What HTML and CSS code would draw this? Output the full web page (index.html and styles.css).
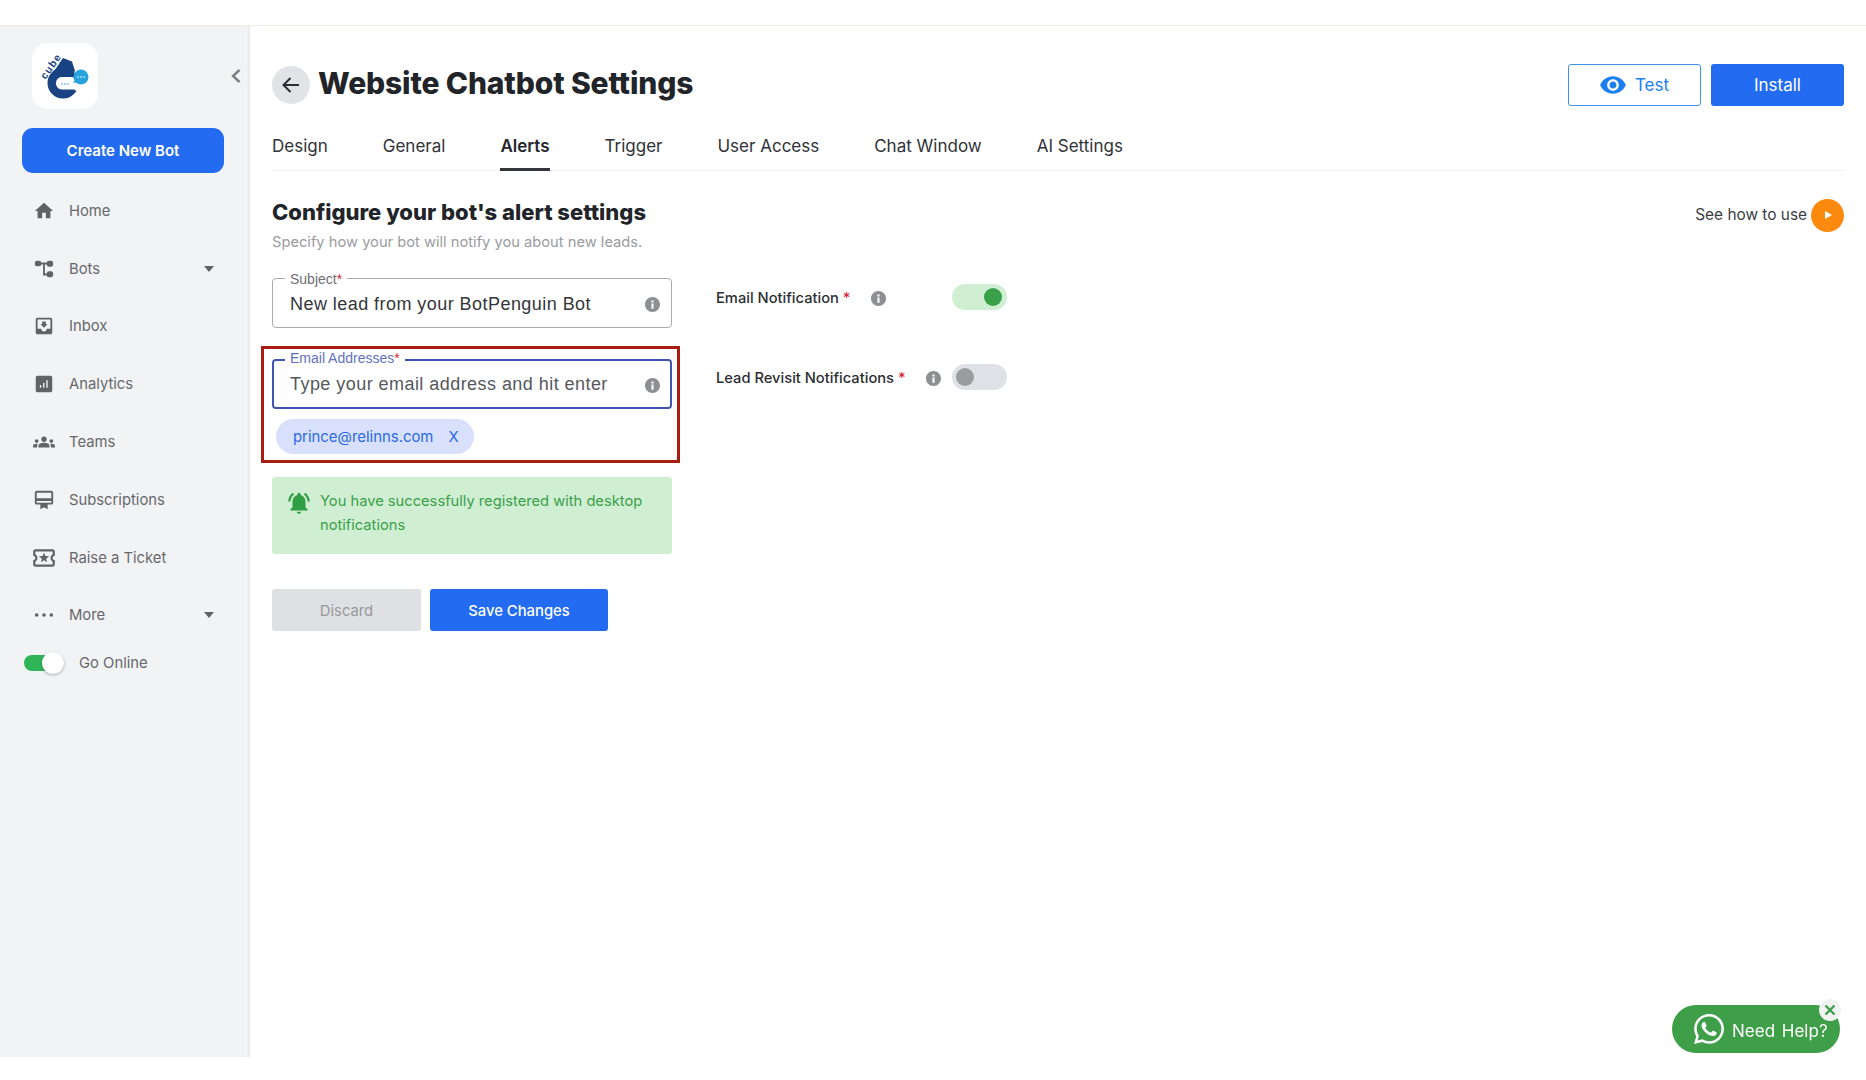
FILE: index.html
```html
<!DOCTYPE html>
<html lang="en">
<head>
<meta charset="utf-8">
<title>Website Chatbot Settings</title>
<link rel="stylesheet" href="styles.css">
</head>
<body>
<svg class="defs" width="0" height="0" aria-hidden="true">
  <symbol id="info" viewBox="2 2 20 20"><path d="M12 2C6.48 2 2 6.48 2 12s4.48 10 10 10 10-4.48 10-10S17.52 2 12 2zm1.4 15.5h-2.8v-6.7h2.8v6.7zm0-8.3h-2.8V6.6h2.8v2.6z"/></symbol>
  <symbol id="caret" viewBox="0 0 10 6"><path d="M0 0h10L5 6z"/></symbol>
</svg>
<header class="topbar"></header>
<div class="shell">
  <aside class="sidebar">
    <div class="brand">
      <div class="logo">
        <svg viewBox="0 0 66 66" width="66" height="66">
          <circle cx="31" cy="40" r="15.500" fill="#1a4384"/>
          <path fill="#1a4384" d="M31 15l9 3.500 3 9.500-10 12-17-3z"/>
          <text class="logo-word" transform="translate(13.500 37) rotate(-55)">cube</text>
          <path fill="#fff" d="M30 34h9c6 0 9 4 8 8l1 8-6-3.500H30c-8 0-8-12.500 0-12.500z"/>
          <circle cx="49" cy="34" r="7.500" fill="#27a4dd"/>
          <path fill="#27a4dd" d="M43 37l-2 3 6-1z"/>
          <g fill="#fff"><circle cx="46" cy="34" r=".8"/><circle cx="49" cy="34" r=".8"/><circle cx="52" cy="34" r=".8"/></g>
          <g fill="#27a4dd"><circle cx="30" cy="41" r=".8"/><circle cx="33" cy="41" r=".8"/><circle cx="36" cy="41" r=".8"/></g>
        </svg>
      </div>
      <svg class="collapse" viewBox="0 0 10 16" width="10" height="16"><path d="M8.500 2L2 8l6.500 6" fill="none" stroke="#7a7d82" stroke-width="2.400"/></svg>
    </div>
    <button class="create">Create New Bot</button>
    <nav class="nav">
      <a class="nav-item"><svg class="nav-icon" viewBox="0 0 24 24"><path d="M10 20v-6h4v6h5v-8h3L12 3 2 12h3v8z"/></svg><span>Home</span></a>
      <a class="nav-item"><svg class="nav-icon" viewBox="0 0 24 24"><rect x="2" y="3" width="7" height="6" rx="2.500"/><rect x="15" y="3" width="7" height="6.500" rx="2.500"/><rect x="15" y="14.500" width="7" height="6.500" rx="2.500"/><path d="M8 5h8v2h-3v10h3v2h-5V7H8z"/></svg><span>Bots</span><svg class="caret"><use href="#caret"/></svg></a>
      <a class="nav-item"><svg class="nav-icon" viewBox="0 0 24 24"><path d="M19 3H4.990c-1.110 0-1.980.9-1.980 2L3 19c0 1.100.88 2 1.990 2H19c1.100 0 2-.9 2-2V5c0-1.100-.9-2-2-2zm0 12h-4c0 1.660-1.350 3-3 3s-3-1.340-3-3H4.990V5H19v10zm-3-5h-2V7h-4v3H8l4 4 4-4z"/></svg><span>Inbox</span></a>
      <a class="nav-item"><svg class="nav-icon" viewBox="0 0 24 24"><path d="M19 3H5c-1.100 0-2 .9-2 2v14c0 1.100.9 2 2 2h14c1.100 0 2-.9 2-2V5c0-1.100-.9-2-2-2zM9 16H7.500v-3H9v3zm3.500 0H11v-5h1.500v5zm3.500 0h-1.500V8H16v8z"/></svg><span>Analytics</span></a>
      <a class="nav-item"><svg class="nav-icon" viewBox="0 0 24 24"><path d="M4 13c1.100 0 2-.9 2-2s-.9-2-2-2-2 .9-2 2 .9 2 2 2zm1.130 1.100c-.37-.06-.74-.1-1.130-.1-.99 0-1.930.21-2.780.58C.48 14.900 0 15.620 0 16.430V18h4.500v-1.610c0-.83.23-1.610.63-2.290zM20 13c1.100 0 2-.9 2-2s-.9-2-2-2-2 .9-2 2 .9 2 2 2zm4 3.430c0-.81-.48-1.530-1.220-1.850-.85-.37-1.790-.58-2.780-.58-.39 0-.76.04-1.130.1.400.68.63 1.460.63 2.290V18H24v-1.570zm-7.760-2.780c-1.170-.52-2.610-.9-4.240-.9-1.630 0-3.070.39-4.240.9C6.680 14.130 6 15.210 6 16.390V18h12v-1.610c0-1.180-.68-2.260-1.760-2.740zM12 12c1.660 0 3-1.340 3-3s-1.340-3-3-3-3 1.340-3 3 1.340 3 3 3z"/></svg><span>Teams</span></a>
      <a class="nav-item"><svg class="nav-icon" viewBox="0 0 24 24"><path d="M20 2H4c-1.110 0-2 .89-2 2v11c0 1.110.89 2 2 2h4v5l4-2 4 2v-5h4c1.110 0 2-.89 2-2V4c0-1.110-.89-2-2-2zm0 13H4v-2h16v2zm0-5H4V4h16v6z"/></svg><span>Subscriptions</span></a>
      <a class="nav-item"><svg class="nav-icon nav-icon-wide" viewBox="0 0 24 24"><path d="M22 10V6c0-1.110-.9-2-2-2H4c-1.100 0-1.990.89-1.990 2v4c1.100 0 1.990.9 1.990 2s-.89 2-2 2v4c0 1.100.9 2 2 2h16c1.100 0 2-.9 2-2v-4c-1.100 0-2-.9-2-2s.9-2 2-2zm-2-1.460c-1.190.69-2 1.990-2 3.460s.81 2.770 2 3.460V18H4v-2.540c1.190-.69 2-1.990 2-3.460 0-1.480-.8-2.770-1.990-3.460L4 6h16v2.540zM9.070 16L12 14.120 14.930 16l-.89-3.360 2.690-2.200-3.470-.21L12 7l-1.270 3.220-3.470.21 2.690 2.200z"/></svg><span>Raise a Ticket</span></a>
      <a class="nav-item"><svg class="nav-icon" viewBox="0 0 24 24"><path d="M4 10a2 2 0 1 0 0 4 2 2 0 0 0 0-4zm8 0a2 2 0 1 0 0 4 2 2 0 0 0 0-4zm8 0a2 2 0 1 0 0 4 2 2 0 0 0 0-4z"/></svg><span>More</span><svg class="caret"><use href="#caret"/></svg></a>
    </nav>
    <div class="online">
      <span class="online-switch"><span class="online-knob"></span></span>
      <span>Go Online</span>
    </div>
  </aside>
  <main class="main">
    <div class="page-head">
      <button class="back" aria-label="Back">
        <svg viewBox="0 0 24 24" width="24" height="24"><path d="M20 12H5M11.500 5L4.500 12l7 7" fill="none" stroke="#2a2d32" stroke-width="2"/></svg>
      </button>
      <h1 class="title">Website Chatbot Settings</h1>
      <div class="head-actions">
        <button class="btn-test">
          <svg viewBox="0 0 24 24" width="28" height="28"><path fill="#1b7ff0" d="M12 4.500C7 4.500 2.730 7.610 1 12c1.730 4.390 6 7.500 11 7.500s9.270-3.110 11-7.500c-1.730-4.390-6-7.500-11-7.500zM12 17c-2.760 0-5-2.240-5-5s2.240-5 5-5 5 2.240 5 5-2.240 5-5 5zm0-8c-1.660 0-3 1.340-3 3s1.340 3 3 3 3-1.340 3-3-1.340-3-3-3z"/></svg>
          Test
        </button>
        <button class="btn-install">Install</button>
      </div>
    </div>
    <div class="tabs">
      <a class="tab">Design</a>
      <a class="tab">General</a>
      <a class="tab tab-active">Alerts</a>
      <a class="tab">Trigger</a>
      <a class="tab">User Access</a>
      <a class="tab">Chat Window</a>
      <a class="tab">AI Settings</a>
    </div>
    <div class="section-head">
      <div>
        <h2 class="section-title">Configure your bot's alert settings</h2>
        <p class="section-sub">Specify how your bot will notify you about new leads.</p>
      </div>
      <div class="how-to">
        <span>See how to use</span>
        <span class="play"><svg viewBox="0 0 10 10" width="10" height="10"><path d="M2 1l7 4-7 4z" fill="#fff"/></svg></span>
      </div>
    </div>
    <div class="settings">
      <div class="form-col">
        <div class="field">
          <label class="field-label">Subject<b>*</b></label>
          <span class="field-text">New lead from your BotPenguin Bot</span>
          <svg class="info info-field"><use href="#info"/></svg>
        </div>
        <div class="highlight">
          <div class="field field-focus">
            <label class="field-label">Email Addresses<b>*</b></label>
            <span class="field-text field-ph">Type your email address and hit enter</span>
            <svg class="info info-field"><use href="#info"/></svg>
          </div>
          <div class="chip"><span>prince@relinns.com</span><span class="chip-x">X</span></div>
        </div>
        <div class="alert">
          <svg class="bell" viewBox="0 0 24 24"><path d="M7.580 4.080L6.150 2.650C3.750 4.480 2.170 7.300 2.030 10.500h2c.15-2.650 1.510-4.970 3.550-6.420zm12.390 6.420h2c-.15-3.200-1.730-6.020-4.120-7.850l-1.420 1.430c2.020 1.450 3.390 3.770 3.540 6.420zM18 11c0-3.070-1.640-5.640-4.500-6.320V4c0-.83-.67-1.500-1.500-1.500s-1.500.67-1.500 1.500v.68C7.630 5.360 6 7.920 6 11v5l-2 2v1h16v-1l-2-2v-5zm-6 11c.14 0 .27-.01.4-.04.65-.14 1.180-.58 1.440-1.180.1-.24.15-.5.15-.78h-4c.01 1.100.9 2 2.010 2z"/></svg>
          <p>You have successfully registered with desktop notifications</p>
        </div>
        <div class="form-actions">
          <button class="btn-discard">Discard</button>
          <button class="btn-save">Save Changes</button>
        </div>
      </div>
      <div class="toggles">
        <div class="toggle-row">
          <span class="toggle-label">Email Notification <i>*</i></span>
          <svg class="info info-side"><use href="#info"/></svg>
          <span class="switch switch-on"><span class="knob"></span></span>
        </div>
        <div class="toggle-row">
          <span class="toggle-label">Lead Revisit Notifications <i>*</i></span>
          <svg class="info info-side"><use href="#info"/></svg>
          <span class="switch"><span class="knob"></span></span>
        </div>
      </div>
    </div>
  </main>
</div>
<div class="help">
  <svg viewBox="0 0 24 24" width="30" height="30"><path fill="#fff" d="M17.472 14.382c-.297-.149-1.758-.867-2.030-.967-.273-.099-.471-.148-.670.150-.197.297-.767.966-.940 1.164-.173.199-.347.223-.644.075-.297-.150-1.255-.463-2.390-1.475-.883-.788-1.480-1.761-1.653-2.059-.173-.297-.018-.458.130-.606.134-.133.298-.347.446-.520.149-.174.198-.298.298-.497.099-.198.050-.371-.025-.520-.075-.149-.669-1.612-.916-2.207-.242-.579-.487-.500-.669-.510-.173-.008-.371-.010-.570-.010-.198 0-.520.074-.792.372-.272.297-1.040 1.016-1.040 2.479 0 1.462 1.065 2.875 1.213 3.074.149.198 2.096 3.200 5.077 4.487.709.306 1.262.489 1.694.625.712.227 1.360.195 1.871.118.571-.085 1.758-.719 2.006-1.413.248-.694.248-1.289.173-1.413-.074-.124-.272-.198-.570-.347m-5.421 7.403h-.004a9.870 9.870 0 0 1-5.031-1.378l-.361-.214-3.741.982.998-3.648-.235-.374a9.860 9.860 0 0 1-1.510-5.260c.001-5.450 4.436-9.884 9.888-9.884 2.640 0 5.122 1.030 6.988 2.898a9.825 9.825 0 0 1 2.893 6.994c-.003 5.450-4.437 9.884-9.885 9.884m8.413-18.297A11.815 11.815 0 0 0 12.050 0C5.495 0 .160 5.335.157 11.892c0 2.096.547 4.142 1.588 5.945L.057 24l6.305-1.654a11.882 11.882 0 0 0 5.683 1.448h.005c6.554 0 11.890-5.335 11.893-11.893a11.821 11.821 0 0 0-3.480-8.413z"/></svg>
  <span class="help-text">Need Help?</span>
  <span class="help-close"><svg viewBox="0 0 12 12" width="12" height="12"><path d="M1.500 1.500l9 9M10.500 1.500l-9 9" stroke="#3f9f49" stroke-width="2.400" fill="none"/></svg></span>
</div>
</body>
</html>
```

FILE: styles.css
```css
* { box-sizing: border-box; }
html, body { margin: 0; padding: 0; }
body {
  width: 1866px;
  height: 1080px;
  overflow: hidden;
  background: #fff;
  font-family: Inter, "Noto Sans", sans-serif;
  color: #24272c;
}
.defs { position: absolute; }
button { font-family: inherit; cursor: pointer; border: 0; }
h1, h2, p { margin: 0; }

.topbar { height: 26px; border-bottom: 1px solid #f3e9de; background: #fff; }
.shell { display: flex; height: 1031px; }

.sidebar {
  width: 250px;
  flex: none;
  background: #f2f3f5;
  box-shadow: inset -3px 0 2px -1px #e8e9eb;
  padding: 17px 26px 0 22px;
}
.brand { display: flex; align-items: center; justify-content: space-between; padding-left: 10px; }
.logo { width: 66px; height: 66px; background: #fff; border-radius: 15px; overflow: hidden; }
.logo-word { font: 700 10.500px "Liberation Sans", sans-serif; letter-spacing: 1px; fill: #1a4384; stroke: #fff; stroke-width: .8px; paint-order: stroke; }
.collapse { margin-right: -17px; margin-bottom: 1px; }
.create {
  display: block;
  width: 202px;
  height: 45px;
  margin-top: 19px;
  background: #236bf0;
  color: #fff;
  border-radius: 11px;
  font-size: 15px;
  font-weight: 600;
}
.nav { margin-top: 9px; }
.nav-item {
  display: flex;
  align-items: center;
  height: 57.8px;
  padding-left: 11px;
  color: #66686c;
  font-size: 14.800px;
}
.nav-icon { width: 22px; height: 22px; fill: #606266; flex: none; margin-right: 14px; }
.nav-icon-wide { width: 26px; height: 26px; margin: 0 12px 0 -2px; }
.caret { width: 10px; height: 6px; fill: #606266; margin-left: auto; margin-right: 10px; }
.online { display: flex; align-items: center; gap: 15px; margin-top: 10px; color: #66686c; font-size: 14.800px; padding-left: 2px; }
.online-switch { display: flex; justify-content: flex-end; width: 40px; height: 16px; background: #2fb457; border-radius: 8px; align-items: center; }
.online-knob { width: 22px; height: 22px; background: #fff; border-radius: 50%; box-shadow: 0 1px 3px rgba(0,0,0,.3); }

.main { flex: 1; padding: 38px 22px 0; min-width: 0; }
.page-head { display: flex; align-items: center; height: 42px; }
.back { width: 38px; height: 38px; border-radius: 50%; background: #e2e3e7; display: flex; align-items: center; justify-content: center; padding: 0; margin-right: 8px; }
.title { font-size: 30px; font-weight: 800; color: #212429; letter-spacing: -.14px; margin-top: -5px; }
.head-actions { margin-left: auto; display: flex; gap: 10px; }
.btn-test, .btn-install { width: 133px; height: 42px; border-radius: 3px; font-size: 17px; display: flex; align-items: center; justify-content: center; }
.btn-test { background: #fff; border: 1.500px solid #3f93ee; color: #1b7ff0; gap: 8px; padding-left: 5px; }
.btn-install { background: #236bf0; color: #fff; padding-bottom: 2px; }

.tabs { display: flex; gap: 55px; height: 47px; margin-top: 18px; border-bottom: 1px solid #f1f1f1; }
.tab { font-size: 17px; color: #2f3237; height: 47px; line-height: 44px; }
.tab-active { font-weight: 600; border-bottom: 3px solid #33363b; color: #24272c; }

.section-head { display: flex; justify-content: space-between; margin-top: 25px; }
.section-title { font-size: 22px; font-weight: 800; color: #212429; line-height: 32px; }
.section-sub { font-size: 14.700px; color: #9a9b9e; line-height: 20px; margin-top: 4px; }
.how-to { display: flex; align-items: center; gap: 4px; font-size: 15.400px; color: #3a3d42; height: 34px; margin-top: 2px; }
.how-to span:first-child { margin-top: -2px; }
.play { width: 33px; height: 33px; border-radius: 50%; background: #fb8a0e; display: flex; align-items: center; justify-content: center; }

.settings { display: flex; margin-top: 26px; gap: 44px; }
.form-col { width: 400px; flex: none; }
.field {
  position: relative;
  display: flex;
  align-items: center;
  height: 50px;
  width: 400px;
  border: 1.500px solid #a9abae;
  border-radius: 4px;
  padding: 0 11px 0 17px;
}
.field-label {
  position: absolute;
  left: 12px;
  top: -9px;
  padding: 0 5px;
  background: #fff;
  font: 14px/18px "Liberation Sans", sans-serif;
  color: #6e7074;
}
.field-label b { color: #d3263c; font-weight: 400; }
.field-text { font: 18px "Liberation Sans", sans-serif; letter-spacing: .45px; color: #33363a; margin-top: 2px; }
.field-ph { color: #55585c; margin-top: 1px; }
.info { fill: #8e8f92; }
.info-field { width: 15px; height: 15px; margin-left: auto; margin-top: 2px; }
.field-focus { border: 2.500px solid #3f55b5; padding-left: 16px; padding-right: 10px; }
.field-focus .field-label { color: #5f72c0; top: -12px; left: 11px; }
.highlight {
  width: 419px;
  height: 117px;
  margin: 18px 0 14px -11px;
  border: 3px solid #a71d12;
  padding: 10px 0 0 8px;
}
.chip {
  display: inline-flex;
  align-items: center;
  gap: 15px;
  width: 198px;
  height: 35px;
  margin: 10px 0 0 4px;
  padding: 0 17px;
  border-radius: 18px;
  background: #d9e0fb;
  color: #2a6ae8;
  font-size: 14.900px;
}
.alert {
  display: flex;
  gap: 8px;
  width: 400px;
  height: 77px;
  padding: 13px 14px;
  border-radius: 3px;
  background: #d0efd2;
  color: #3aa04a;
  font-size: 14.700px;
  line-height: 23.500px;
}
.bell { width: 26px; height: 26px; fill: #2f9e44; flex: none; }
.form-actions { display: flex; gap: 9px; margin-top: 35px; }
.btn-discard, .btn-save { height: 42px; border-radius: 3px; font-size: 14.800px; padding: 2px 0 0; }
.btn-discard { width: 149px; background: #dfe0e3; color: #97989b; }
.btn-save { width: 178px; background: #236bf0; color: #fff; font-weight: 500; }

.toggles { display: flex; flex-direction: column; gap: 54px; padding-top: 6px; }
.toggle-row { display: flex; align-items: center; height: 26px; width: 291px; font-size: 14.700px; font-weight: 500; color: #2b2e33; }
.toggle-label { margin-top: 1px; }
.toggle-label i { color: #d3263c; font-style: normal; }
.info-side { width: 15px; height: 15px; margin-left: 20px; margin-top: 2px; }
.switch { width: 55px; height: 26px; border-radius: 13px; background: #e0e1e6; margin-left: auto; display: flex; align-items: center; padding: 0 4px; }
.knob { width: 18px; height: 18px; border-radius: 50%; background: #9b9c9f; }
.switch-on { background: #d0efd2; justify-content: flex-end; padding-right: 5px; }
.switch-on .knob { background: #3aa04a; }

.help {
  position: fixed;
  left: 1672px;
  top: 1005px;
  width: 168px;
  height: 48px;
  border-radius: 24px;
  background: #3f9f49;
  color: #fff;
  display: flex;
  align-items: center;
  gap: 8px;
  padding-left: 22px;
  font-size: 17px;
  word-spacing: 2px;
}
.help-text { margin-top: 3px; }
.help-close {
  position: absolute;
  right: -1px;
  top: -6px;
  width: 22px;
  height: 22px;
  border-radius: 50%;
  background: #f1f3f2;
  display: flex;
  align-items: center;
  justify-content: center;
}
```
